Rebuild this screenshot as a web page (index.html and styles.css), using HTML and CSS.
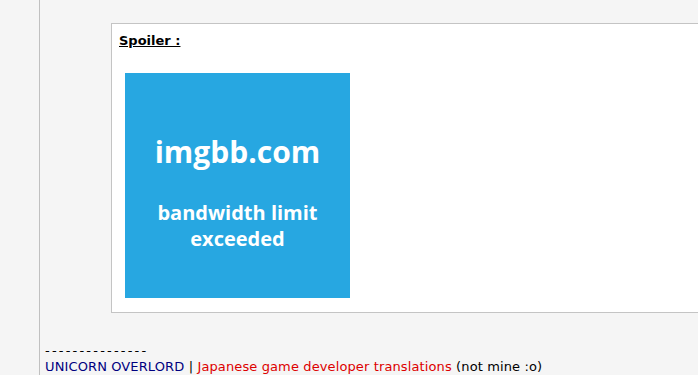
FILE: index.html
```html
<!DOCTYPE html>
<html lang="en">
<head>
    <meta charset="UTF-8">
    <title>Post</title>
    <link rel="stylesheet" href="styles.css">
</head>
<body>
    <div class="page">
        <div class="gutter"></div>
        <div class="post">
            <div class="spoiler">
                <div class="spoiler-title">Spoiler :</div>
                <div class="spoiler-body">
                    <div class="placeholder">
                        <div class="placeholder-site">imgbb.com</div>
                        <div class="placeholder-msg">bandwidth limit<br>exceeded</div>
                    </div>
                </div>
            </div>

            <div class="signature">
                <div class="sig-line">---------------</div>
                <div class="sig-text">
                    <span class="sig-game">UNICORN OVERLORD</span> |
                    <span class="sig-link">Japanese game developer translations</span>
                    (not mine :o)
                </div>
            </div>
        </div>
    </div>
</body>
</html>
```

FILE: styles.css
```css
* {
    margin: 0;
    padding: 0;
    box-sizing: border-box;
}

body {
    font-family: 'DejaVu Sans', Verdana, sans-serif;
    font-size: 13px;
    background: #f5f5f5;
    color: #000;
    overflow: hidden;
}

.page {
    display: flex;
    height: 375px;
}

.gutter {
    width: 40px;
    flex-shrink: 0;
    border-right: 1px solid #c0c0c0;
}

.post {
    flex: 1;
    padding-left: 5px;
}

.spoiler {
    margin: 23px 0 0 66px;
    width: 640px;
    height: 290px;
    background: #fff;
    border: 1px solid #c4c4c4;
    padding: 9px 7px;
}

.spoiler-title {
    font-weight: bold;
    text-decoration: underline;
    line-height: 16px;
}

.spoiler-body {
    padding: 24px 0 0 6px;
}

.placeholder {
    width: 225px;
    height: 225px;
    background: #27a7e1;
    color: #fff;
    font-family: 'Open Sans', sans-serif;
    font-weight: bold;
    text-align: center;
    display: flex;
    flex-direction: column;
    align-items: center;
    padding-top: 59px;
}

.placeholder-site {
    font-size: 30px;
    line-height: 40px;
}

.placeholder-msg {
    font-size: 20px;
    line-height: 26px;
    margin-top: 28px;
}

.signature {
    margin-top: 30px;
    line-height: 16px;
}

.sig-line {
    letter-spacing: 2.2px;
}

.sig-text {
    letter-spacing: 0.12px;
}

.sig-game {
    color: #000080;
}

.sig-link {
    color: #dd0000;
}
```
